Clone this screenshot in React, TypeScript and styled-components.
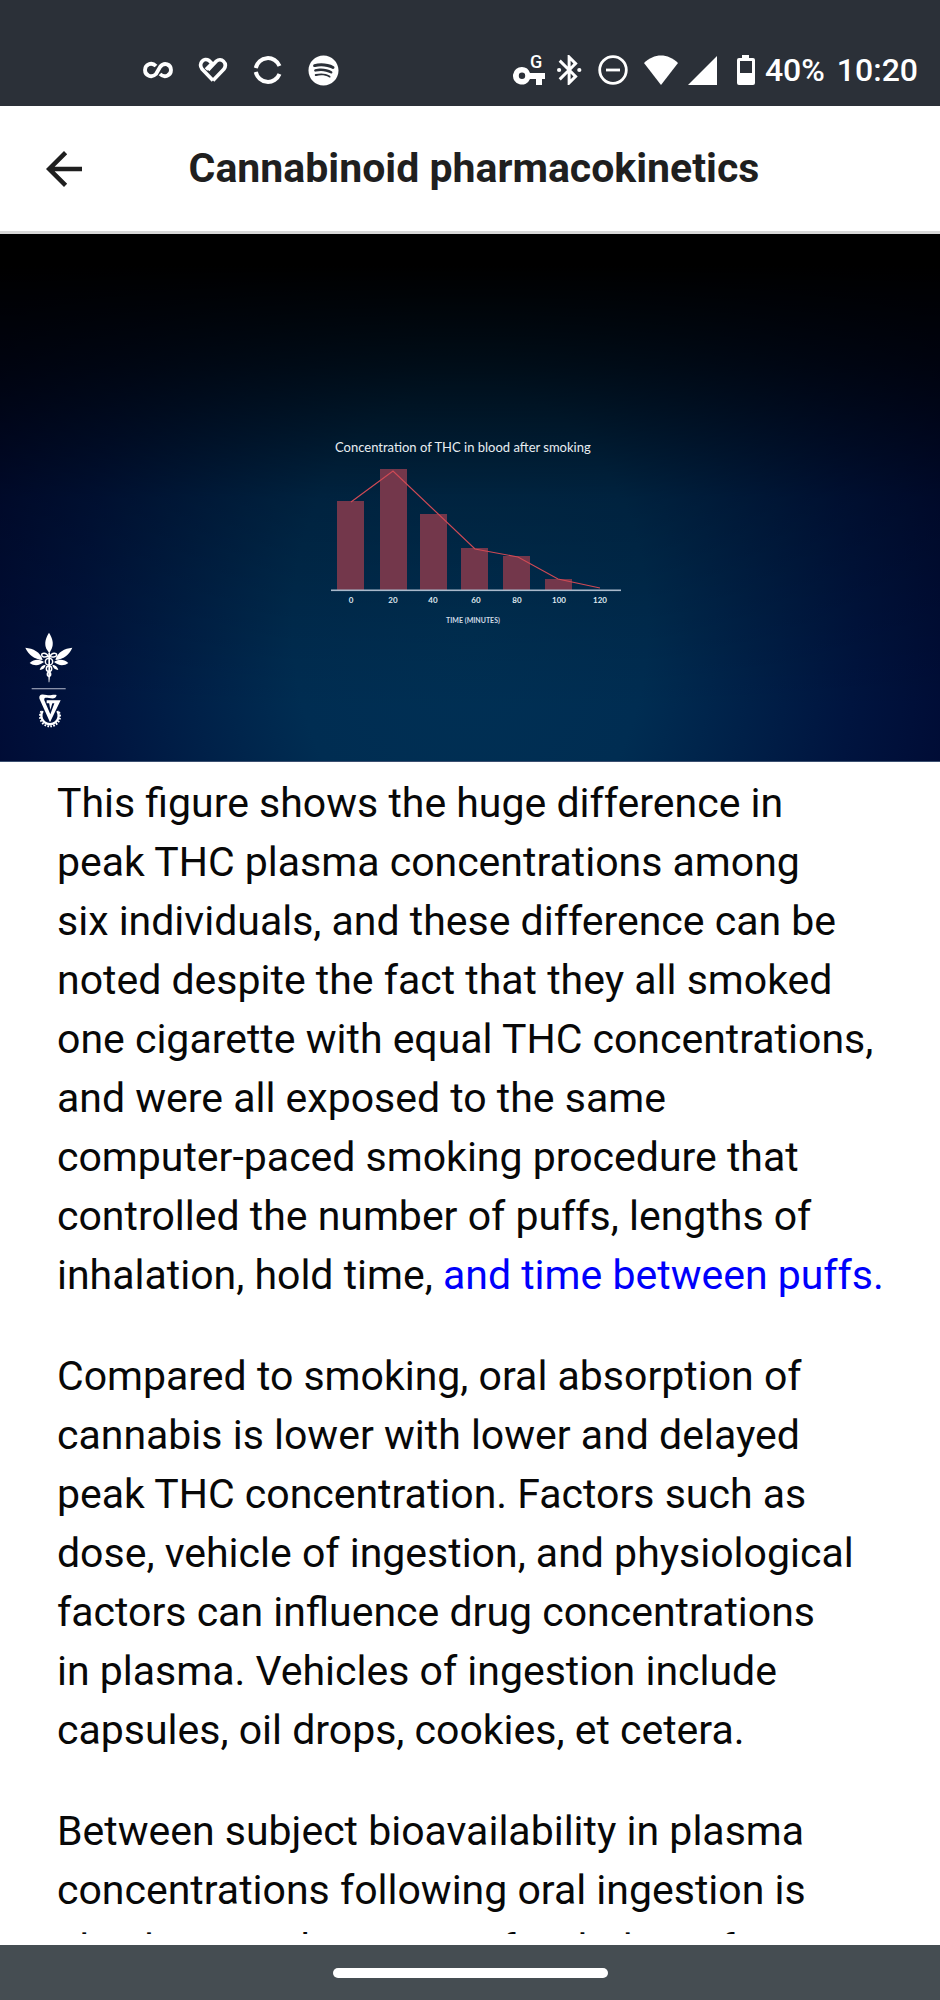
import React from "react";
import styled, { createGlobalStyle } from "styled-components";
import { MdArrowBack } from "react-icons/md";
import { FaSpotify } from "react-icons/fa";

const GlobalStyle = createGlobalStyle`
  *, *::before, *::after { box-sizing: border-box; }
  body {
    margin: 0;
    background: #fff;
    color: #0b0b0c;
    font-family: Roboto, "Liberation Sans", sans-serif;
  }
`;

const Screen = styled.div`
  display: flex;
  flex-direction: column;
  height: 100vh;
`;

const StatusBar = styled.div`
  display: flex;
  flex: none;
  align-items: center;
  justify-content: space-between;
  height: 106px;
  padding: 34px 22px 0 143px;
  background: #2b3038;
  color: #fff;
`;

const IconGroup = styled.div<{ $gap: number }>`
  display: flex;
  align-items: center;
  gap: ${(p) => p.$gap}px;
  svg { display: block; flex: none; }
`;

const StatusText = styled.span`
  font-size: 32px;
  font-weight: 500;
  line-height: 40px;
`;

const Clock = styled(StatusText)`
  margin-left: 2px;
`;

const AppBar = styled.header`
  display: grid;
  flex: none;
  grid-template-columns: 128px 1fr 120px;
  align-items: center;
  height: 128px;
  border-bottom: 3px solid #d8d8d8;
  background: #fff;
`;

const BackButton = styled.button`
  display: flex;
  justify-content: center;
  align-items: center;
  width: 128px;
  height: 96px;
  padding: 0;
  border: 0;
  background: none;
  color: #1f1f1f;
  cursor: pointer;
`;

const Title = styled.h1`
  margin: 0;
  padding-bottom: 2px;
  color: #1f1f1f;
  font-size: 41px;
  font-weight: 700;
  line-height: 48px;
  text-align: center;
  white-space: nowrap;
`;

const Content = styled.main`
  flex: 1;
  min-height: 0;
  overflow-y: auto;
  scrollbar-width: none;
`;

const Video = styled.figure`
  position: relative;
  display: flex;
  justify-content: center;
  margin: 0;
  padding: 201px 0 128px 12px;
  border-bottom: 1px solid #3a4f70;
  background:
    linear-gradient(to bottom, #000 6%, rgba(0, 0, 0, 0.7) 25%, rgba(0, 0, 0, 0.24) 50%, transparent 90%),
    radial-gradient(ellipse 54% 130% at 50% 74%, #003054 0%, #002d52 35%, #00143f 76%, #000a33 100%);
`;

const Emblem = styled.svg`
  position: absolute;
  left: 25px;
  bottom: 32px;
`;

const Chart = styled.svg`
  display: block;
  font-family: Lato, sans-serif;
`;

const Article = styled.article`
  padding: 12px 56px 0 57px;
  color: #080808;
  font-size: 41px;
  line-height: 59px;
`;

const Paragraph = styled.p`
  margin: 0 0 42px;
  white-space: pre-line;
`;

const TextLink = styled.a`
  color: #0000fb;
  text-decoration: none;
`;

const NavBar = styled.nav`
  display: flex;
  flex: none;
  align-items: center;
  justify-content: center;
  height: 66px;
  border-top: 11px solid #fff;
  background: #454d52;
`;

const HomeHandle = styled.button`
  width: 275px;
  height: 10px;
  padding: 0;
  border: 0;
  border-radius: 5px;
  background: #fff;
`;

const bars = [
  { x: 6, top: 40, label: "0", cx: 20 },
  { x: 49, top: 8, label: "20", cx: 62 },
  { x: 89, top: 53, label: "40", cx: 102 },
  { x: 130, top: 87, label: "60", cx: 145 },
  { x: 172, top: 95, label: "80", cx: 186 },
  { x: 214, top: 118, label: "100", cx: 228 },
  { x: 256, top: 129, label: "120", cx: 269 },
];

const ConcentrationChart = () => (
  <Chart width="290" height="198" viewBox="0 -26 290 198" role="img" aria-label="Concentration of THC in blood after smoking">
    <text x="4" y="-9" fontSize="13" fill="#e8eef2">Concentration of THC in blood after smoking</text>
    {bars.slice(0, 6).map((b) => (
      <rect key={b.label} x={b.x} y={b.top} width="27" height={129 - b.top} fill="#73374b" />
    ))}
    <polyline points="20,41 62,10 144,88 187,96 227,118 269,127" fill="none" stroke="#cf4a55" strokeWidth="1.2" />
    <rect x="0" y="128.5" width="290" height="1.6" fill="#a9b9cb" />
    {bars.map((b) => (
      <text key={b.label} x={b.cx} y="142" fontSize="8" fontWeight="700" fill="#dfe7ee" textAnchor="middle">{b.label}</text>
    ))}
    <text x="142" y="162" fontSize="7" fontWeight="700" fill="#cfd9e4" textAnchor="middle">TIME (MINUTES)</text>
  </Chart>
);

const Logos = () => (
  <Emblem width="48" height="97" viewBox="74 66 144 291" aria-hidden="true">
    <g fill="#fff">
      <path d="M146 68C156 84 161 100 154 116L147 130L138 116C131 100 136 84 146 68Z" />
      <path d="M75 113C98 115 121 126 127 150C102 148 84 134 75 113Z" />
      <path d="M216 113C193 115 171 126 165 150C190 148 207 134 216 113Z" />
      <path d="M88 159C102 147 117 147 131 156C118 167 102 169 88 159Z" />
      <path d="M204 159C190 147 175 147 161 156C174 167 190 169 204 159Z" />
      <path d="M118 180C120 170 127 165 136 164C135 173 128 179 118 180Z" />
      <path d="M174 180C172 170 165 165 156 164C157 173 164 179 174 180Z" />
      <path d="M144 128h5v70l-2 19h-2l-1-19Z" />
    </g>
    <g fill="none" stroke="#fff" strokeWidth="4.5">
      <path d="M144 139C137 126 124 128 124 135S134 142 144 139C155 142 169 142 169 135S155 126 149 139" />
      <ellipse cx="146" cy="155" rx="11" ry="10" />
      <ellipse cx="146" cy="176" rx="8" ry="8" />
      <ellipse cx="146" cy="193" rx="5" ry="6" />
    </g>
    <rect x="94" y="234" width="102" height="4" fill="#8991a8" />
    <path d="M127 303A26 26 0 1 0 171 303" fill="none" stroke="#fff" strokeWidth="7" />
    <path d="M123 304A30 30 0 1 0 175 304" fill="none" stroke="#fff" strokeWidth="6" strokeDasharray="5 4" />
    <path d="M118 268C114 253 124 251 139 255C151 258 157 252 169 255C166 267 158 266 146 264C137 263 130 262 132 271L150 313L162 280H139V271H181L149 337Z" fill="#fff" />
    <path d="M146 277H157L150 300Z" fill="#fff" />
  </Emblem>
);

const InfinityIcon = () => (
  <svg width="30" height="30" viewBox="0 0 30 30" fill="none" stroke="#fff" strokeWidth="3.8">
    <path d="M13 11C8.500 6.500 2 9.500 2 15S8.500 23.500 13 19L17 12C21.500 6.500 28 9.500 28 15S21.500 23.500 17 19" />
  </svg>
);

const HeartIcon = () => (
  <svg width="30" height="30" viewBox="0 0 30 30" fill="none" stroke="#fff" strokeWidth="3.600" strokeLinejoin="round">
    <path d="M15 25.500L4 14C0 8 6 2 11 5.500L14 8.500L8 14.500" />
    <path d="M15 25.500L26 14C30 8 23 2 18.500 6L10 15" />
  </svg>
);

const RingIcon = () => (
  <svg width="30" height="30" viewBox="0 0 30 30" fill="none" stroke="#fff" strokeWidth="4">
    <path d="M2.800 13A12.400 12.400 0 0 1 26.500 11" />
    <path d="M2.800 17A12.400 12.400 0 0 0 26.500 19" />
  </svg>
);

const KeyIcon = () => (
  <svg width="34" height="40" viewBox="0 -4 34 40" fill="#fff">
    <path fillRule="evenodd" d="M9 13a8.800 8.800 0 0 1 8 6H32v6h-3v6h-6v-6h-6a8.800 8.800 0 1 1-8-12Zm0 5.500a3.200 3.200 0 1 0 0 6.400a3.200 3.200 0 0 0 0-6.400Z" />
    <text x="17" y="14" fontSize="18" fontWeight="500">G</text>
  </svg>
);

const BluetoothIcon = () => (
  <svg width="31" height="30" viewBox="2.900 2 20.700 20" fill="#fff">
    <path d="M16.710 7.710L11 2h-1v7.590L5.410 5 4 6.410 9.590 12 4 17.590 5.410 19 10 14.410V22h1l5.710-5.710L12.410 12l4.300-4.290zM12 5.830l1.880 1.880L12 9.590V5.830zm1.880 10.460L12 18.170v-3.760l1.880 1.880z" />
    <circle cx="4.300" cy="12" r="1.400" />
    <circle cx="17.800" cy="12" r="1.400" />
  </svg>
);

const DoNotDisturbIcon = () => (
  <svg width="36" height="30" viewBox="0 0 36 30" fill="none" stroke="#fff" strokeWidth="2.800">
    <circle cx="15" cy="15" r="13.300" />
    <path d="M8 15H22" />
  </svg>
);

const WifiIcon = () => (
  <svg width="34" height="30" viewBox="0 0 34 30" fill="#fff">
    <path d="M17 30L0 8C10-2 24-2 34 8Z" />
  </svg>
);

const SignalIcon = () => (
  <svg width="39" height="30" viewBox="0 0 39 30" fill="#fff">
    <path d="M0 30H29V1Z" />
  </svg>
);

const BatteryIcon = () => (
  <svg width="18" height="30" viewBox="0 0 18 30" fill="#fff">
    <path fillRule="evenodd" d="M5 0H12V3H16Q18 3 18 5V28Q18 30 16 30H2Q0 30 0 28V5Q0 3 2 3H5ZM3 6V18H15V6Z" />
  </svg>
);

export default function App() {
  return (
    <>
      <GlobalStyle />
      <Screen>
        <StatusBar>
          <IconGroup $gap={25}>
            <InfinityIcon />
            <HeartIcon />
            <RingIcon />
            <FaSpotify size={31} />
          </IconGroup>
          <IconGroup $gap={10}>
            <KeyIcon />
            <BluetoothIcon />
            <DoNotDisturbIcon />
            <WifiIcon />
            <SignalIcon />
            <BatteryIcon />
            <StatusText>40%</StatusText>
            <Clock>10:20</Clock>
          </IconGroup>
        </StatusBar>
        <AppBar>
          <BackButton aria-label="Back">
            <MdArrowBack size={54} />
          </BackButton>
          <Title>Cannabinoid pharmacokinetics</Title>
        </AppBar>
        <Content>
          <Video>
            <ConcentrationChart />
            <Logos />
          </Video>
          <Article>
            <Paragraph>
              This figure shows the huge difference in
              {"\n"}peak THC plasma concentrations among
              {"\n"}six individuals, and these difference can be noted despite the fact that they all smoked
              one cigarette with equal THC concentrations, and were all exposed to the same
              {"\n"}computer-paced smoking procedure that controlled the number of puffs, lengths of
              inhalation, hold time, <TextLink href="#time-between-puffs">and time between puffs.</TextLink>
            </Paragraph>
            <Paragraph>
              Compared to smoking, oral absorption of cannabis is lower with lower and delayed
              {"\n"}peak THC concentration. Factors such as dose, vehicle of ingestion, and physiological
              factors can influence drug concentrations
              {"\n"}in plasma. Vehicles of ingestion include capsules, oil drops, cookies, et cetera.
            </Paragraph>
            <Paragraph>
              Between subject bioavailability in plasma concentrations following oral ingestion is
              {"\n"}also lower to have more few below of
            </Paragraph>
          </Article>
        </Content>
        <NavBar aria-label="System navigation">
          <HomeHandle aria-label="Home" />
        </NavBar>
      </Screen>
    </>
  );
}
